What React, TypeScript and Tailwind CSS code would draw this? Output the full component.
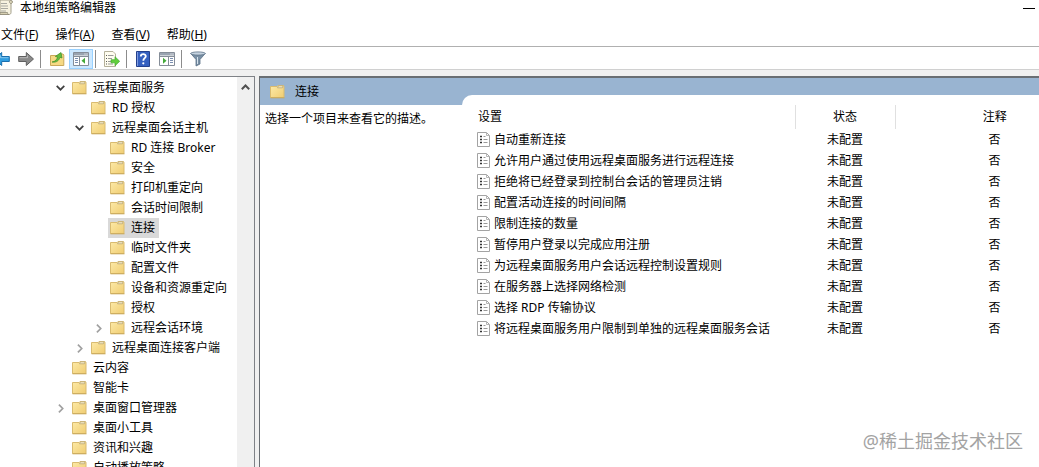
import { useState } from "react";
import type { ReactNode } from "react";

type TreeNode = {
  label: string;
  depth: 0 | 1 | 2;
  state?: "open" | "closed";
};

const TREE: TreeNode[] = [
  { label: "远程桌面服务", depth: 0, state: "open" },
  { label: "RD 授权", depth: 1 },
  { label: "远程桌面会话主机", depth: 1, state: "open" },
  { label: "RD 连接 Broker", depth: 2 },
  { label: "安全", depth: 2 },
  { label: "打印机重定向", depth: 2 },
  { label: "会话时间限制", depth: 2 },
  { label: "连接", depth: 2 },
  { label: "临时文件夹", depth: 2 },
  { label: "配置文件", depth: 2 },
  { label: "设备和资源重定向", depth: 2 },
  { label: "授权", depth: 2 },
  { label: "远程会话环境", depth: 2, state: "closed" },
  { label: "远程桌面连接客户端", depth: 1, state: "closed" },
  { label: "云内容", depth: 0 },
  { label: "智能卡", depth: 0 },
  { label: "桌面窗口管理器", depth: 0, state: "closed" },
  { label: "桌面小工具", depth: 0 },
  { label: "资讯和兴趣", depth: 0 },
  { label: "自动播放策略", depth: 0 },
];

const SETTINGS = [
  "自动重新连接",
  "允许用户通过使用远程桌面服务进行远程连接",
  "拒绝将已经登录到控制台会话的管理员注销",
  "配置活动连接的时间间隔",
  "限制连接的数量",
  "暂停用户登录以完成应用注册",
  "为远程桌面服务用户会话远程控制设置规则",
  "在服务器上选择网络检测",
  "选择 RDP 传输协议",
  "将远程桌面服务用户限制到单独的远程桌面服务会话",
];

const MENUS = [
  ["文件", "F"],
  ["操作", "A"],
  ["查看", "V"],
  ["帮助", "H"],
];

const INDENT = { 0: "pl-[53px]", 1: "pl-[72px]", 2: "pl-[91px]" };

export default function App() {
  const [selected, setSelected] = useState("连接");

  return (
    <div className="relative flex h-screen flex-col overflow-hidden bg-white font-['Noto_Sans','Noto_Sans_CJK_SC',sans-serif] text-xs text-black">
      <header className="flex h-6 items-start justify-between pr-1">
        <div className="flex items-center gap-1.5">
          <ScrollIcon />
          <h1 className="leading-4">本地组策略编辑器</h1>
        </div>
        <button aria-label="最小化" className="flex h-4 w-3 items-center">
          <span className="h-px w-full bg-black" />
        </button>
      </header>

      <nav className="flex h-[22px] items-center gap-[17px] pl-px">
        {MENUS.map(([name, key]) => (
          <button key={key} className="leading-4">
            {name}(<span className="underline">{key}</span>)
          </button>
        ))}
      </nav>

      {/* Toolbar */}
      <div className="flex h-6 shrink-0 items-center border-y border-t-[#b0b0b0] border-b-[#d0d0d0] pt-0.5">
        <div className="-ml-[10px] flex items-center">
          <Tool label="后退"><Arrow flip fill="#2f9de0" stroke="#1b6fae" /></Tool>
          <Tool label="前进"><Arrow fill="#8a8a8a" stroke="#606060" /></Tool>
          <Separator />
          <Tool label="上移一级"><FolderUp /></Tool>
          <Tool label="显示/隐藏控制台树" active><PaneIcon side="left" /></Tool>
          <Separator />
          <Tool label="导出列表"><ExportIcon /></Tool>
          <Separator />
          <Tool label="帮助"><HelpIcon /></Tool>
          <Tool label="显示/隐藏操作窗格"><PaneIcon side="right" /></Tool>
          <Separator />
          <Tool label="筛选器"><FilterIcon /></Tool>
        </div>
      </div>

      <main className="flex min-h-0 flex-1 gap-1 bg-[#f0f0f0] pt-1.5">
        {/* Console tree */}
        <aside className="flex w-[255px] shrink-0 overflow-hidden border-t border-r border-[#7f8287] bg-white">
          <ul className="min-w-0 flex-1 pt-px">
            {TREE.map((n) => (
              <li key={n.label} className={`flex h-5 items-center ${INDENT[n.depth]}`}>
                <span className="flex w-[15px] shrink-0 justify-center">
                  {n.state && <Chevron state={n.state} />}
                </span>
                <button
                  onClick={() => setSelected(n.label)}
                  className={`ml-0.5 flex h-5 items-center gap-1.5 whitespace-nowrap pr-1 pl-0.5 ${
                    n.label === selected ? "bg-[#d9d9d9]" : ""
                  }`}
                >
                  <Folder />
                  {n.label}
                </button>
              </li>
            ))}
          </ul>
          <div className="w-[17px] bg-[#f0f0f0]">
            <button aria-label="向上滚动" className="flex h-5 w-full items-center justify-center">
              <svg width="9" height="6" viewBox="0 0 9 6" fill="none" stroke="#505050" strokeWidth="2">
                <path d="M.8 5.2 4.5 1.5 8.2 5.2" />
              </svg>
            </button>
          </div>
        </aside>

        <section className="flex min-w-0 flex-1 overflow-hidden border-t-2 border-l border-[#696e73] bg-white">
          <div className="w-[202px] shrink-0">
            <div className="flex h-[27px] items-center gap-2.5 bg-[#99b4d1] pl-2.5">
              <Folder />
              <h2>{selected}</h2>
            </div>
            <p className="mt-1.5 whitespace-nowrap pl-[5px] leading-4">选择一个项目来查看它的描述。</p>
          </div>

          <div className="flex min-w-0 flex-1 bg-[#99b4d1] pt-[17px]">
            <div className="min-w-0 flex-1 overflow-hidden rounded-tl-[10px] bg-white pt-2.5">
              <table className="w-[632px] table-fixed">
                <thead>
                  <tr className="h-6">
                    <th className="w-[333px] border-r border-[#e0e0e0] p-0 pl-4 text-left font-normal">设置</th>
                    <th className="w-[100px] border-r border-[#e0e0e0] p-0 font-normal">状态</th>
                    <th className="p-0 font-normal">注释</th>
                  </tr>
                </thead>
                <tbody>
                  {SETTINGS.map((s) => (
                    <tr key={s} className="h-[21px] text-center">
                      <td className="p-0 pl-[15px]">
                        <div className="flex items-center gap-1 whitespace-nowrap">
                          <SettingIcon />
                          {s}
                        </div>
                      </td>
                      <td className="p-0">未配置</td>
                      <td className="p-0">否</td>
                    </tr>
                  ))}
                </tbody>
              </table>
            </div>
          </div>
        </section>
      </main>

      <p className="absolute right-4 bottom-3 text-lg leading-7 text-[#a3a3a3]">@稀土掘金技术社区</p>
    </div>
  );
}

function Tool({ label, active, children }: { label: string; active?: boolean; children: ReactNode }) {
  return (
    <button
      aria-label={label}
      className={`flex h-5 w-6 items-center justify-center border ${
        active ? "border-[#99d1ff] bg-[#cce8ff]" : "border-transparent"
      }`}
    >
      {children}
    </button>
  );
}

function Separator() {
  return <span className="mr-1 ml-0.5 h-[18px] w-px bg-[#8c8c8c]" />;
}

function Chevron({ state }: { state: "open" | "closed" }) {
  return state === "open" ? (
    <svg width="9" height="6" viewBox="0 0 9 6" fill="none" stroke="#404040" strokeWidth="1.7">
      <path d="M.7.9 4.5 4.7 8.3.9" />
    </svg>
  ) : (
    <svg width="6" height="9" viewBox="0 0 6 9" fill="none" stroke="#a0a0a0" strokeWidth="1.7">
      <path d="M.9.7 4.7 4.5.9 8.3" />
    </svg>
  );
}

function Folder() {
  return (
    <svg width="15" height="14" viewBox="0 0 15 14" className="shrink-0">
      <defs>
        <linearGradient id="folder" x1="0" y1="0" x2="1" y2="1">
          <stop offset="0" stopColor="#fdeaa8" />
          <stop offset="1" stopColor="#f0cd72" />
        </linearGradient>
      </defs>
      <path d="M.5 12.500V1.500H7L8 .5H13.500L14 1.500v11z" fill="url(#folder)" stroke="#d9bb70" />
      <path d="M8.500.8H13L12.500 2.800H7.500z" fill="#f7efd0" stroke="#b9a673" strokeWidth=".8" />
      <path d="M.5 12.800H14.500" stroke="#c9a85a" />
    </svg>
  );
}

function ScrollIcon() {
  return (
    <svg width="14" height="16" viewBox="0 0 14 16">
      <path d="M0 0h10.5c2 0 2.5 3 .5 3v9.5c0 1.2-.8 2-2 2H0z" fill="#f6f2df" stroke="#a39f8c" />
      <path d="M10.5.5c-1.5 0-1.5 3 .5 3 1.8 0 2-3-.5-3" fill="#ddd7bb" stroke="#8f8b78" strokeWidth=".8" />
      <path d="M1 3.5h6M1 6h7M1 8.5h7M1 11h5" stroke="#a8a8a0" />
      <path d="M0 12.5h7.5c0 1.5.7 2 1.5 2H0z" fill="#d7d0b2" stroke="#8f8b78" strokeWidth=".8" />
    </svg>
  );
}

function Arrow({ flip, fill, stroke }: { flip?: boolean; fill: string; stroke: string }) {
  return (
    <svg width="16" height="16" viewBox="0 0 16 16" className={flip ? "shrink-0 -scale-x-100" : "shrink-0"}>
      <path d="M.7 5.500h7.600V1.500L15.500 8l-7.200 6.500v-4H.7z" fill={fill} stroke={stroke} />
      <path d="M1.500 6.700h8V4.300" fill="none" stroke="#fff" strokeOpacity=".4" />
    </svg>
  );
}

function FolderUp() {
  return (
    <svg width="16" height="16" viewBox="0 0 16 16">
      <path d="M1.5 14.5V4.5H9L10.500 3H14l.8 1v10.5z" fill="#f6d984" stroke="#c9a85a" />
      <path d="M3 11C6.500 10.500 8 8.500 8.500 5.800L6.300 5.500 12 1.500 13 7l-2-.7C10 9.500 7.500 11.800 3 11z" fill="#62bd3f" stroke="#3d8f27" strokeWidth=".7" />
    </svg>
  );
}

function PaneIcon({ side }: { side: "left" | "right" }) {
  const left = side === "left";
  return (
    <svg width="16" height="14" viewBox="0 0 16 14">
      <path d="M.5.5h15v13H.5z" fill="#fff" stroke="#858d98" />
      <path d="M1 1h14v2.5H1z" fill="#9aa4b1" />
      <path d="M1 4.500h14" stroke="#858d98" />
      <path d="M11.5 2h1M13.5 2h1" stroke="#fff" />
      <path d={left ? "M6.5 4v9" : "M9.5 4v9"} stroke="#858d98" />
      <path d={left ? "M2 6.5h3M2 8.5h3M2 10.5h3" : "M11 6.5h3M11 8.5h3M11 10.5h3"} stroke="#7b8fb0" />
      <path d={left ? "M12 5.8v6L8.5 8.8z" : "M4 5.8v6l3.5-3z"} fill="#43aa39" />
    </svg>
  );
}

function ExportIcon() {
  return (
    <svg width="16" height="16" viewBox="0 0 16 16">
      <path d="M.5.5H9L11.5 3v12.5H.5z" fill="#fffdf0" stroke="#b5b19b" />
      <path d="M2 4.5h1M2 7.5h1M2 10.5h1M2 13h1" stroke="#5c5c5c" />
      <path d="M4 4.5h5.5M4 7.5h4M4 10.5h4M4 13h5" stroke="#9b9b9b" />
      <path d="M7 8.700h4V5.700l4.700 4.600-4.700 4.500v-3H7z" fill="#62cf3d" stroke="#45a832" strokeWidth=".7" />
    </svg>
  );
}

function HelpIcon() {
  return (
    <svg width="14" height="16" viewBox="0 0 14 16">
      <path d="M.5.5h13v15H.5z" fill="#3560c0" stroke="#24408d" />
      <path d="M1.5 1v14" stroke="#7e9be0" />
      <path d="M4.8 5.5c0-3 5-3 5-.2C9.8 7.2 7.3 7.3 7.3 9.8" fill="none" stroke="#fff" strokeWidth="1.8" />
      <circle cx="7.3" cy="12.3" r="1.1" fill="#fff" />
    </svg>
  );
}

function FilterIcon() {
  return (
    <svg width="16" height="16" viewBox="0 0 16 16">
      <path d="M.8 2.500 6 8.500v6.500l4-2V8.500l5.200-6z" fill="#7990a5" stroke="#586f85" strokeWidth=".8" />
      <ellipse cx="8" cy="2.500" rx="7.300" ry="1.600" fill="#c4d2df" stroke="#5f7589" strokeWidth=".8" />
      <path d="M7.500 6v7" stroke="#d6e2ec" />
    </svg>
  );
}

function SettingIcon() {
  return (
    <svg width="13" height="15" viewBox="0 0 13 15" className="shrink-0">
      <path d="M.5.5H9.5L12.5 3.5v11H.5z" fill="#fff" stroke="#a3a3a3" />
      <path d="M9.5.5v3h3" fill="none" stroke="#b5b5b5" />
      <path d="M3 4.5h2M3 7.5h2M3 10.5h2" stroke="#333" strokeWidth="1.6" />
      <path d="M6.5 4.5h2M6.5 7.5h4M6.5 10.5h4" stroke="#999" />
    </svg>
  );
}
